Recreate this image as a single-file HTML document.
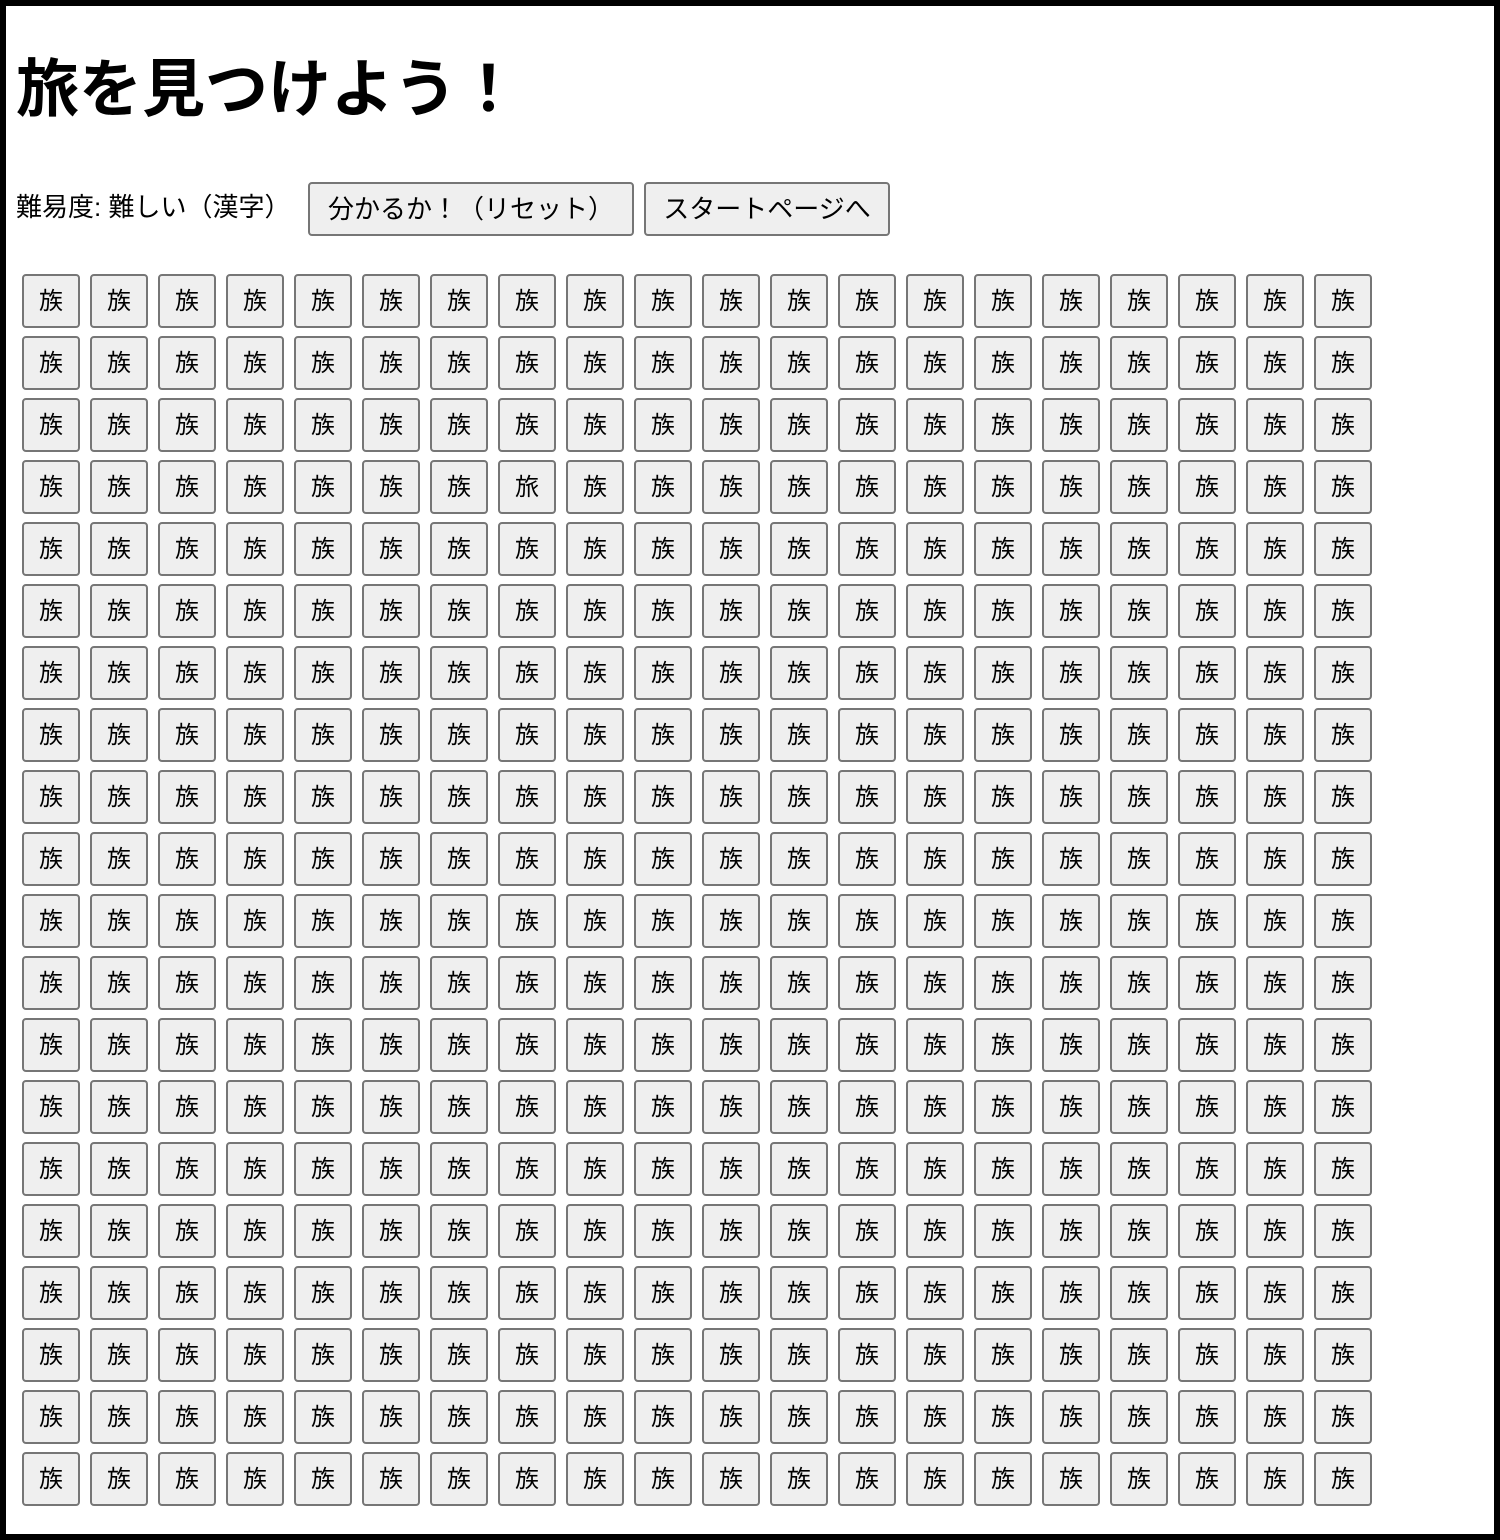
<!DOCTYPE html>
<html><head><meta charset="utf-8"><style>
html,body{margin:0;padding:0;}
body{width:1500px;height:1540px;position:relative;font-family:"Liberation Sans","Noto Sans CJK JP",sans-serif;background:#fff;overflow:hidden}
.frame{position:absolute;left:0;top:0;width:1488px;height:1528px;border:6px solid #000;}
h1{position:absolute;left:16px;top:52px;margin:0;font-size:63px;font-weight:bold;line-height:76px;white-space:nowrap}
.lbl{position:absolute;left:16px;top:190px;font-size:26px;line-height:34px;white-space:nowrap}
.b{position:absolute;box-sizing:border-box;background:#efefef;border:2px solid #767676;border-radius:4px;font-size:24px;display:flex;align-items:center;justify-content:center;font-family:"Liberation Sans","Noto Sans CJK JP",sans-serif;color:#000;padding-bottom:6px}
.t{font-size:26px;padding-bottom:4px}
</style></head><body>
<div class="frame"></div>
<h1>旅を見つけよう！</h1>
<div class="lbl">難易度: 難しい（漢字）</div>
<div class="b t" style="left:308px;top:182px;width:326px;height:54px">分かるか！（リセット）</div>
<div class="b t" style="left:644px;top:182px;width:246px;height:54px">スタートページへ</div>
<div id="g"></div>
<script>
var h='';for(var j=0;j<20;j++)for(var i=0;i<20;i++){h+='<div class="b" style="left:'+(22+68*i)+'px;top:'+(274+62*j)+'px;width:58px;height:54px">'+((j==3&&i==7)?'旅':'族')+'</div>';}
document.getElementById('g').innerHTML=h;
</script>
</body></html>
